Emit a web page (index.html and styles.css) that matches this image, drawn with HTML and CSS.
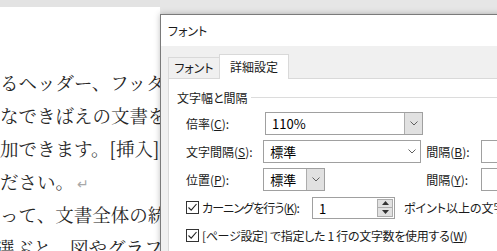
FILE: index.html
```html
<!DOCTYPE html>
<html lang="ja">
<head>
  <meta charset="UTF-8" />
  <title>フォント</title>
  <link rel="stylesheet" href="styles.css">
</head>
<body>
  <div class="topbar">
    <div class="ruler-left"></div>
    <div class="ruler-right"></div>
  </div>

  <!-- Document behind the dialog -->
  <div class="doc">
    <p>るヘッダー、フッター、表紙、テキスト</p>
    <p>なできばえの文書を作成できます。</p>
    <p>加できます。[挿入] をクリックしてから</p>
    <p>ださい。<span class="ret">↵</span></p>
    <p>って、文書全体の統一感を出すことも</p>
    <p class="cut">選ぶと、図やグラフ、SmartArt</p>
  </div>

  <!-- Font dialog -->
  <div class="dialog">
    <div class="dlg-title">フォント</div>
    <div class="dlg-body">
      <div class="tabs">
        <div class="tab">フォント</div>
        <div class="tab active">詳細設定</div>
      </div>
      <div class="panel">
        <div class="group-head"><span>文字幅と間隔</span><i></i></div>
        <div class="rows">
          <div class="row">
            <span class="lbl">倍率(<u>C</u>):</span>
            <div class="combo wide">
              <span class="val">110%</span>
              <span class="drop btn"><svg width="8" height="5" viewBox="0 0 8 5"><path d="M0.5 0.5 L4 4 L7.5 0.5" /></svg></span>
            </div>
          </div>
          <div class="row">
            <span class="lbl">文字間隔(<u>S</u>):</span>
            <div class="ctl">
              <div class="combo wide">
                <span class="val">標準</span>
                <span class="drop"><svg width="8" height="5" viewBox="0 0 8 5"><path d="M0.5 0.5 L4 4 L7.5 0.5" /></svg></span>
              </div>
            </div>
            <span class="lbl2">間隔(<u>B</u>):</span>
            <div class="box"></div>
          </div>
          <div class="row">
            <span class="lbl">位置(<u>P</u>):</span>
            <div class="ctl">
              <div class="combo short">
                <span class="val">標準</span>
                <span class="drop btn"><svg width="8" height="5" viewBox="0 0 8 5"><path d="M0.5 0.5 L4 4 L7.5 0.5" /></svg></span>
              </div>
            </div>
            <span class="lbl2">間隔(<u>Y</u>):</span>
            <div class="box"></div>
          </div>
          <div class="row">
            <span class="chk-lbl">
              <span class="chk"><svg width="11" height="11" viewBox="0 0 11 11"><path d="M1.5 5.5 L4.2 8.2 L9.5 2" /></svg></span>
              <span class="kana">カーニングを行う(<u>K</u>):</span>
            </span>
            <div class="spin">
              <span class="val">1</span>
              <span class="arrows">
                <span class="up"><svg width="7" height="4" viewBox="0 0 7 4"><path d="M0 4 L3.5 0 L7 4 Z" /></svg></span>
                <span class="down"><svg width="7" height="4" viewBox="0 0 7 4"><path d="M0 0 L3.5 4 L7 0 Z" /></svg></span>
              </span>
            </div>
            <span class="after">ポイント以上の文字</span>
          </div>
          <div class="row">
            <span class="chk-lbl">
              <span class="chk"><svg width="11" height="11" viewBox="0 0 11 11"><path d="M1.5 5.5 L4.2 8.2 L9.5 2" /></svg></span>
              <span class="long">[ページ設定] で指定した 1 行の文字数を使用する(<u>W</u>)</span>
            </span>
          </div>
        </div>
      </div>
    </div>
  </div>
</body>
</html>
```

FILE: styles.css
```css
body {
  margin: 0;
  width: 497px;
  height: 251px;
  overflow: hidden;
  position: relative;
  background: #fff;
  font-family: "Noto Sans CJK JP", sans-serif;
}
.topbar {
  display: flex;
  align-items: flex-start;
  height: 14px;
}
.ruler-left {
  width: 160px;
  height: 7px;
  background: #e3e3e3;
}
.ruler-right {
  flex: 1;
  height: 14px;
  background: #e6e6e6;
}

/* document */
.doc {
  padding-top: 52px;
  font-family: "Noto Serif CJK JP", "Noto Sans CJK JP", serif;
  font-size: 18.5px;
  color: #262626;
  white-space: nowrap;
}
.doc p {
  margin: 0;
  height: 33px;
  line-height: 33px;
}
.doc .cut {
  margin-left: -4px;
}
.ret {
  color: #a8a8a8;
  font-size: 14px;
  margin-left: 3px;
}

/* dialog */
.dialog {
  position: absolute;
  left: 160px;
  top: 14px;
  width: 360px;
  height: 260px;
  border: 1px solid #7a7a7a;
  background: #f0f0f0;
  box-shadow: 0 0 6px rgba(0, 0, 0, 0.25);
  font-size: 12px;
  color: #1a1a1a;
  font-feature-settings: "palt";
}
.dlg-title {
  height: 31px;
  line-height: 31px;
  padding-left: 7px;
  background: #fff;
}
.dlg-body {
  padding: 8px 0 0 7px;
}
.tabs {
  display: flex;
  align-items: flex-end;
  height: 24px;
}
.tab {
  width: 52px;
  height: 21px;
  line-height: 20px;
  text-align: center;
  border: 1px solid #d9d9d9;
  border-bottom: none;
  box-sizing: border-box;
  margin-right: -1px;
}
.tab.active {
  width: 70px;
  height: 25px;
  line-height: 24px;
  background: #fff;
  position: relative;
  margin-bottom: -1px;
  z-index: 1;
}
.panel {
  height: 200px;
  background: #fff;
  border: 1px solid #d9d9d9;
  padding: 11px 0 0 8px;
}
.group-head {
  display: flex;
  align-items: center;
  gap: 3px;
  height: 14px;
}
.group-head i {
  flex: 1;
  height: 1px;
  background: #dcdcdc;
}
.rows {
  padding-left: 9px;
  margin-top: 8px;
}
.row {
  display: flex;
  align-items: center;
  height: 23px;
  margin-bottom: 5px;
}
.lbl {
  width: 79px;
}
.ctl {
  width: 167px;
}
.lbl2 {
  width: 56px;
}
.combo {
  display: flex;
  height: 23px;
  box-sizing: border-box;
  border: 1px solid #a0a0a0;
  background: #fff;
}
.combo.wide {
  width: 158px;
}
.combo.short {
  width: 62px;
}
.val {
  flex: 1;
  padding-left: 6px;
  line-height: 21px;
  font-size: 13px;
  color: #000;
}
.drop {
  width: 17px;
  display: flex;
  align-items: center;
  justify-content: center;
}
.drop.btn {
  background: #e1e1e1;
  border-left: 1px solid #adadad;
}
.drop path {
  fill: none;
  stroke: #606060;
  stroke-width: 1;
}
.box {
  width: 40px;
  height: 23px;
  box-sizing: border-box;
  border: 1px solid #a0a0a0;
  background: #fff;
}
.chk-lbl {
  display: flex;
  align-items: center;
  gap: 3px;
  width: 126px;
  flex: none;
  white-space: nowrap;
}
.kana {
  letter-spacing: -0.9px;
}
.long {
  letter-spacing: -0.3px;
}
.chk {
  width: 13px;
  height: 13px;
  box-sizing: border-box;
  border: 1px solid #333;
  display: flex;
  align-items: center;
  justify-content: center;
  flex: none;
}
.chk path {
  fill: none;
  stroke: #222;
  stroke-width: 1.1;
}
.spin {
  display: flex;
  width: 83px;
  height: 22px;
  box-sizing: border-box;
  border: 1px solid #a0a0a0;
}
.arrows {
  width: 16px;
  display: flex;
  flex-direction: column;
  padding: 1px 1px 1px 0;
}
.arrows span {
  flex: 1;
  display: flex;
  align-items: center;
  justify-content: center;
  background: #e1e1e1;
  border: 1px solid #adadad;
}
.arrows .down {
  border-top: none;
}
.arrows path {
  fill: #333;
}
.after {
  margin-left: 9px;
  white-space: nowrap;
}
```
